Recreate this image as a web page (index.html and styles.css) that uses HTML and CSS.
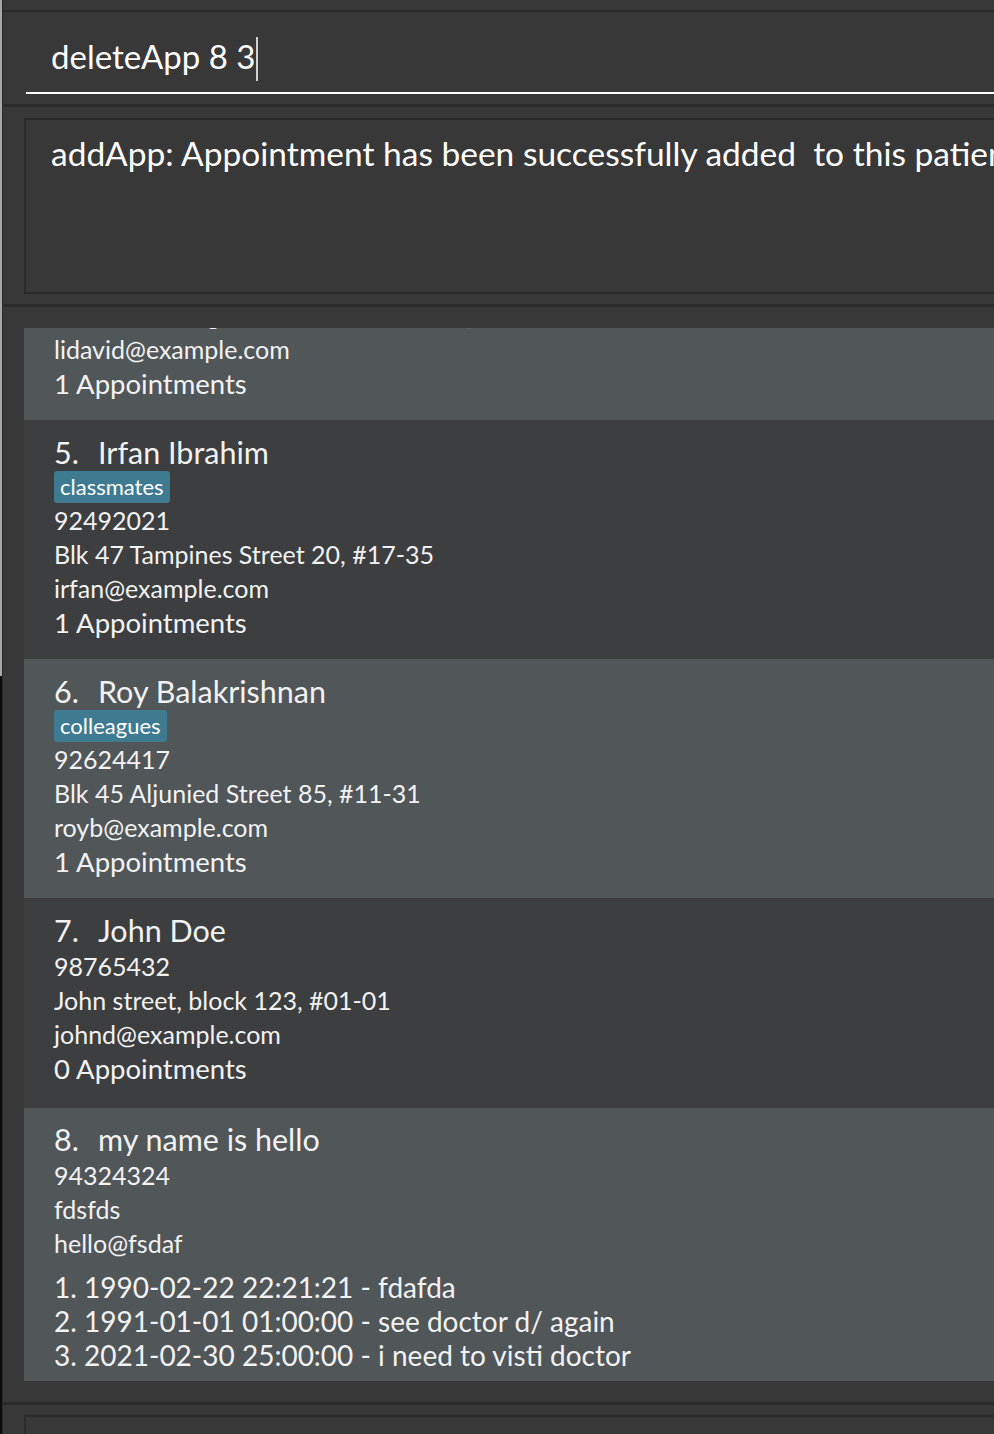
FILE: index.html
```html
<!DOCTYPE html>
<html lang="en">
<head>
<meta charset="utf-8">
<title>Address Book</title>
<link rel="stylesheet" href="styles.css">
</head>
<body>
<div class="window">
  <div class="edge">
    <div class="edge-top"></div>
    <div class="edge-bottom"></div>
  </div>
  <div class="main">
    <div class="command-pane">
      <div class="command-box"><span class="command-text">deleteApp 8 3</span><span class="caret"></span></div>
    </div>
    <div class="result-pane">
      <div class="result-box">addApp: Appointment has been successfully added&nbsp; to this patient.</div>
    </div>
    <div class="list-pane">
      <div class="list-viewport">
        <div class="card light">
          <div class="name-row"><span class="card-id">4.</span><span class="card-name">David Li</span></div>
          <div class="tags"><span class="tag">family</span></div>
          <div class="field">91031282</div>
          <div class="field">Blk 436 Serangoon Gardens Street 26, #16-43</div>
          <div class="field">lidavid@example.com</div>
          <div class="appts">1 Appointments</div>
        </div>
        <div class="card dark">
          <div class="name-row"><span class="card-id">5.</span><span class="card-name">Irfan Ibrahim</span></div>
          <div class="tags"><span class="tag">classmates</span></div>
          <div class="field">92492021</div>
          <div class="field">Blk 47 Tampines Street 20, #17-35</div>
          <div class="field">irfan@example.com</div>
          <div class="appts">1 Appointments</div>
        </div>
        <div class="card light">
          <div class="name-row"><span class="card-id">6.</span><span class="card-name">Roy Balakrishnan</span></div>
          <div class="tags"><span class="tag">colleagues</span></div>
          <div class="field">92624417</div>
          <div class="field">Blk 45 Aljunied Street 85, #11-31</div>
          <div class="field">royb@example.com</div>
          <div class="appts">1 Appointments</div>
        </div>
        <div class="card dark no-tags">
          <div class="name-row"><span class="card-id">7.</span><span class="card-name">John Doe</span></div>
          <div class="field">98765432</div>
          <div class="field">John street, block 123, #01-01</div>
          <div class="field">johnd@example.com</div>
          <div class="appts">0 Appointments</div>
        </div>
        <div class="card light with-list">
          <div class="name-row"><span class="card-id">8.</span><span class="card-name">my name is hello</span></div>
          <div class="field">94324324</div>
          <div class="field">fdsfds</div>
          <div class="field">hello@fsdaf</div>
          <div class="appt-list">
            <div class="appt">1. 1990-02-22 22:21:21 - fdafda</div>
            <div class="appt">2. 1991-01-01 01:00:00 - see doctor d/ again</div>
            <div class="appt">3. 2021-02-30 25:00:00 - i need to visti doctor</div>
          </div>
        </div>
      </div>
    </div>
    <div class="status-pane">
      <div class="status-box"></div>
    </div>
  </div>
</div>
</body>
</html>
```

FILE: styles.css
```css
html, body {
  margin: 0;
  padding: 0;
  overflow: hidden;
  background: #383838;
}

.window {
  display: flex;
  width: 1300px;
  height: 1434px;
  background: #383838;
  font-family: "Lato", "Open Sans", sans-serif;
  color: #f2f2f2;
}

.edge {
  width: 3px;
  display: flex;
  flex-direction: column;
  flex-shrink: 0;
}

.edge-top {
  height: 676px;
  background: linear-gradient(to right, #a8a8a8 0 2px, #2b2b2b 2px 3px);
}

.edge-bottom {
  flex: 1;
  background: linear-gradient(to right, #0c0c0c 0 2px, #2b2b2b 2px 3px);
}

.main {
  flex: 1;
  min-width: 0;
  display: flex;
  flex-direction: column;
  padding-top: 10px;
}

/* command */
.command-pane {
  border-top: 2px solid #2b2b2b;
  border-bottom: 3px solid #2b2b2b;
  padding: 0 0 10px 23px;
}

.command-box {
  height: 56px;
  padding: 24px 0 0 25px;
  border-bottom: 2px solid #ffffff;
  font-size: 33px;
  line-height: 40px;
  color: #ffffff;
  white-space: nowrap;
}

.caret {
  display: inline-block;
  width: 1.5px;
  height: 44px;
  margin-left: 1px;
  background: #d0d0d0;
  vertical-align: -12px;
}

/* result */
.result-pane {
  padding: 11px 0 10px 21px;
  border-bottom: 3px solid #2b2b2b;
}

.result-box {
  height: 159px;
  border: 2px solid #2b2b2b;
  border-right: none;
  padding: 13px 0 0 25px;
  font-size: 33.5px;
  line-height: 40px;
  color: #ffffff;
  white-space: nowrap;
  overflow: hidden;
}

/* list */
.list-pane {
  padding: 21px 0 21px 21px;
  border-bottom: 3px solid #2b2b2b;
}

.list-viewport {
  height: 1053px;
  overflow: hidden;
  display: flex;
  flex-direction: column;
  justify-content: flex-end;
}

.card {
  flex-shrink: 0;
  padding: 13px 0 18px 30px;
}

.card.no-tags {
  padding-bottom: 21px;
}

.card.with-list {
  padding-top: 12px;
  padding-bottom: 9px;
}

.card.light {
  background: #515659;
}

.card.dark {
  background: #3c3e3f;
}

.name-row {
  display: flex;
  align-items: baseline;
  height: 38px;
  line-height: 38px;
  font-size: 30.5px;
  white-space: nowrap;
}

.card-id {
  width: 44px;
}

.tags {
  display: flex;
  gap: 6px;
  height: 32px;
  align-items: center;
}

.tag {
  background: #3e7b91;
  color: #ffffff;
  font-size: 22px;
  line-height: 32px;
  height: 32px;
  padding: 0 6px;
  border-radius: 3px;
}

.field {
  font-size: 25px;
  line-height: 34px;
  height: 34px;
  white-space: nowrap;
}

.appts {
  font-size: 27.5px;
  line-height: 36px;
  height: 36px;
  white-space: nowrap;
}

.appt-list {
  margin-top: 10px;
}

.appt {
  font-size: 28px;
  line-height: 34px;
  height: 34px;
  white-space: nowrap;
}

/* status */
.status-pane {
  flex: 1;
  padding: 10px 0 0 21px;
}

.status-box {
  height: 100%;
  border-top: 2px solid #2b2b2b;
  border-left: 2px solid #2b2b2b;
}
```
